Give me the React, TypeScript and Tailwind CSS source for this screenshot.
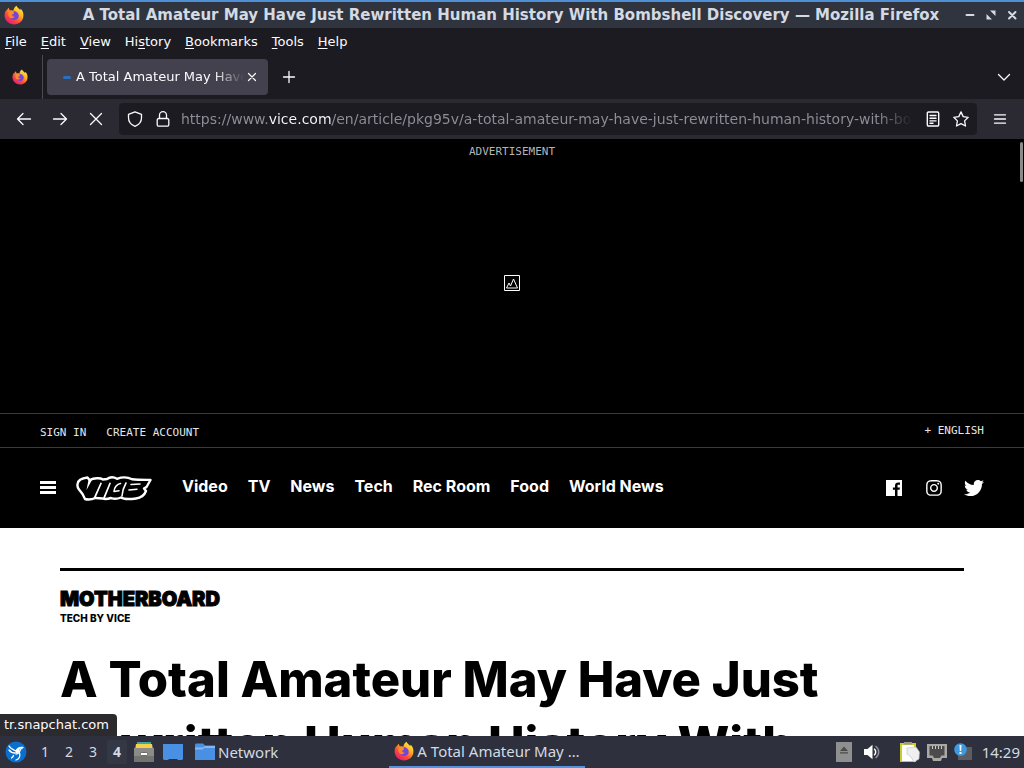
import React from "react";
import { FaInstagram, FaTwitter } from "react-icons/fa";

const PAGE_TITLE = "A Total Amateur May Have Just Rewritten Human History With Bombshell Discovery";
const HEADLINE = "A Total Amateur May Have Just Rewritten Human History With";
const PAGE_URL =
  "https://www.vice.com/en/article/pkg95v/a-total-amateur-may-have-just-rewritten-human-history-with-bombshell-discovery";

function FirefoxIcon({ className, id }: { className: string; id: string }) {
  return (
    <svg viewBox="0 0 32 32" className={className} aria-hidden="true">
      <defs>
        <linearGradient id={id} x1="0.85" y1="0.05" x2="0.2" y2="0.95">
          <stop offset="0" stopColor="#fff04a" />
          <stop offset="0.35" stopColor="#ffb025" />
          <stop offset="0.65" stopColor="#ff5034" />
          <stop offset="1" stopColor="#e11a78" />
        </linearGradient>
      </defs>
      <path
        fill={`url(#${id})`}
        d="M20 1c1 3 4 4 6 7 .6-.6.6-1.500.5-2.500C30 9 31.500 13 31 18c-.8 8-7 13-15 13S1.500 25 1 17.500c-.2-4 1-7.500 3-10 0 1 0 1.500.3 2C5 7 6.500 5.500 8 4.500c-.2 1.500.3 3 1.300 4 2-.3 4-.2 5.700.8C15 6 17 2.500 20 1z"
      />
      <path fill="#7446d8" d="M15 10c4-1 8 2 8.500 6.500C24 21 20.500 24 16.500 24S9.500 21.500 9 18c3 2 6 1.500 8-.5-2.500 0-5-1-6-3 1.500.3 3 0 4.500-1.500z" />
      <path fill="#ff8a2a" d="M7 12c2.500-1.500 5-1.300 6.500 0L16 13c0 1.500-3.500 1.800-4 3-.3 2 2 3.500 5 2.500-1.500 3-5.500 3.500-8 1.500C7.500 18.500 6 15 7 12z" />
    </svg>
  );
}

function LineIcon({ d, size = "size-4", width = 1.3 }: { d: string; size?: string; width?: number }) {
  return (
    <svg
      viewBox="0 0 16 16"
      className={`${size} shrink-0`}
      fill="none"
      stroke="currentColor"
      strokeWidth={width}
      strokeLinecap="round"
      strokeLinejoin="round"
      aria-hidden="true"
    >
      <path d={d} />
    </svg>
  );
}

function TitleBar() {
  return (
    <header className="flex h-7 shrink-0 items-center border-t-2 border-[#4f8fd6] bg-[#2f343f] px-1 text-[#d3dae3]">
      <FirefoxIcon id="fx-title" className="size-5 shrink-0" />
      <h1 className="ml-9 min-w-0 flex-1 truncate text-center text-[15px] leading-5 font-bold">
        {PAGE_TITLE} — Mozilla Firefox
      </h1>
      <div className="flex shrink-0 items-center gap-[5px]">
        <button type="button" aria-label="Minimize">
          <LineIcon d="M4.500 8h7" width={2} />
        </button>
        <button type="button" aria-label="Restore">
          <svg viewBox="0 0 16 16" className="size-4" fill="currentColor" aria-hidden="true">
            <path d="M7 3.500h5.500V9zM3.500 7v5.500H9z" />
          </svg>
        </button>
        <button type="button" aria-label="Close window">
          <LineIcon d="M5 5l6.500 6.500M11.500 5L5 11.500" width={2} />
        </button>
      </div>
    </header>
  );
}

const menus: [string, string, string][] = [
  ["", "F", "ile"],
  ["", "E", "dit"],
  ["", "V", "iew"],
  ["Hi", "s", "tory"],
  ["", "B", "ookmarks"],
  ["", "T", "ools"],
  ["", "H", "elp"],
];

function MenuBar() {
  return (
    <nav aria-label="Application menu" className="flex h-[27px] shrink-0 items-center gap-3.5 bg-[#1c1b22] px-[5px] text-[13px] text-[#fbfbfe]">
      {menus.map(([pre, key, post]) => (
        <button type="button" key={key + post}>
          {pre}
          <span className="underline underline-offset-2">{key}</span>
          {post}
        </button>
      ))}
    </nav>
  );
}

function TabStrip() {
  return (
    <div className="flex h-11 shrink-0 items-center bg-[#1c1b22] text-[#fbfbfe]">
      <button type="button" aria-label="Pinned tab" className="flex h-full w-[43px] items-center justify-center border-r border-[#4a4a55] pr-0.5">
        <FirefoxIcon id="fx-pin" className="size-4" />
      </button>
      <div className="ml-1 flex h-9 w-[221px] items-center rounded bg-[#42414d] pr-2 pl-4">
        <span className="h-[3px] w-2 shrink-0 rounded-full bg-[#2b6fc0]" />
        <button
          type="button"
          className="ml-[5px] min-w-0 flex-1 overflow-hidden text-left text-[13px] whitespace-nowrap [mask-image:linear-gradient(to_right,#000_82%,transparent)]"
        >
          {PAGE_TITLE}
        </button>
        <button type="button" aria-label="Close tab">
          <LineIcon d="M4.500 4.500l7 7M11.500 4.500l-7 7" width={1.2} />
        </button>
      </div>
      <button type="button" aria-label="New tab" className="ml-[13px]">
        <LineIcon d="M8 2.500v11M2.500 8h11" />
      </button>
      <button type="button" aria-label="List all tabs" className="mr-3 ml-auto">
        <LineIcon d="M2.500 5.500L8 11l5.500-5.500" />
      </button>
    </div>
  );
}

function Toolbar() {
  return (
    <div className="flex h-10 shrink-0 items-center bg-[#2b2a33] text-[#fbfbfe]">
      <div className="flex w-[119px] items-center gap-5 pl-4">
        <button type="button" aria-label="Back">
          <LineIcon d="M14.500 8H1.500M7 2.500L1.500 8 7 13.500" />
        </button>
        <button type="button" aria-label="Forward">
          <LineIcon d="M1.500 8h13M9 2.500L14.500 8 9 13.500" />
        </button>
        <button type="button" aria-label="Stop">
          <LineIcon d="M2.500 2.500l11 11M13.500 2.500l-11 11" />
        </button>
      </div>
      <div className="flex h-8 min-w-0 flex-1 items-center gap-3 rounded bg-[#1c1b22] px-2">
        <button type="button" aria-label="Tracking protection">
          <LineIcon d="M8 .8l6.500 2.500v3.400c0 4-2.500 7-6.500 8.600C4 13.700 1.500 10.700 1.500 6.700V3.300z" />
        </button>
        <button type="button" aria-label="Connection security">
          <LineIcon d="M4.500 7V4.200a3.500 3.500 0 0 1 7 0V7M3.700 7.500h8.600a1.500 1.500 0 0 1 1.500 1.500v4.700a1.500 1.500 0 0 1-1.500 1.500H3.700a1.500 1.500 0 0 1-1.500-1.500V9a1.500 1.500 0 0 1 1.500-1.500z" />
        </button>
        <input
          aria-label="Address"
          readOnly
          defaultValue={PAGE_URL}
          className="-ml-0.5 min-w-0 flex-1 bg-[linear-gradient(to_right,#8f8f9a_88px,#fbfbfe_88px,#fbfbfe_151px,#8f8f9a_151px)] bg-clip-text text-[14px] text-transparent outline-none [mask-image:linear-gradient(to_right,#000_95%,transparent)]"
        />
        <button type="button" aria-label="Reader view">
          <LineIcon d="M3.500 1h9a1.200 1.200 0 0 1 1.200 1.200v11.600a1.200 1.200 0 0 1-1.200 1.200h-9a1.200 1.200 0 0 1-1.200-1.200V2.200A1.200 1.200 0 0 1 3.500 1zM5 4.500h6M5 7.200h6M5 9.900h6M5 12.300h3" width={1.4} />
        </button>
        <button type="button" aria-label="Bookmark this page">
          <LineIcon d="M8 .9l2.200 4.700 5 .7-3.600 3.600.9 5.100L8 12.600 3.500 15l.9-5.100L.8 6.300l5-.7z" />
        </button>
      </div>
      <button type="button" aria-label="Open application menu" className="mr-4 ml-[15px]">
        <LineIcon d="M2.500 3.800h11M2.500 8h11M2.500 12.200h11" />
      </button>
    </div>
  );
}

function ViceLogo() {
  return (
    <svg viewBox="0 0 76 25" className="h-[25px] w-[76px]" role="img" aria-label="Vice">
      <path
        fill="none"
        stroke="#fff"
        strokeWidth="2.400"
        strokeLinejoin="round"
        d="M1.500 8C2 4 7 2 11.500 1.500l2 2.500C18 2 24 1.500 27 3.500L31 3C34 .8 38 1 41 2.800 46 1 52 1.200 56 3.200c6 .5 12 .6 18.500.8L70.500 11c-1 .8-2.500 1-2.500 1.500l2 2.500c-1.500 4-5 6.800-10 7.500-6 .8-12 1-15-1-3 1.300-7 1.700-10 .5-3 1-6 1.500-8.500.5L19.500 22c-3 1.200-7 2-10.500 1L6.500 18 3 13.500C1.800 12 1.200 10 1.500 8z"
      />
      <path fill="#fff" d="M12.500 4h3.500l-5.500 10zM24.500 6.500l1.500.5-6.500 15h-2zM33.500 6.500l1.500.5-6 15h-2z" />
      <path
        fill="none"
        stroke="#fff"
        strokeWidth="1.600"
        strokeLinecap="round"
        strokeLinejoin="round"
        d="M44.500 7.500c-3.500.5-6.500 4-6.500 8l5-.8M50 7c-2 3.500-3.500 7-4 13M55 8.500l9-.5M53 14l8-.8"
      />
    </svg>
  );
}

function SiteHeader() {
  const sections = ["Video", "TV", "News", "Tech", "Rec Room", "Food", "World News"];
  return (
    <div className="shrink-0 bg-black text-white">
      <section aria-label="Advertisement" className="flex h-[274px] flex-col items-center pt-[5px]">
        <p className="font-['DejaVu_Sans_Mono',monospace] text-[11px] leading-4 text-[#b5b5b5]">ADVERTISEMENT</p>
        <svg viewBox="0 0 16 16" className="mt-[115px] size-4" fill="none" stroke="#fff" aria-hidden="true">
          <path d="M.5.5h15v15H.5z" />
          <path d="M2.500 13l2.500-5 1.500 3 3-7 4 9z" />
        </svg>
      </section>
      <div className="flex h-[35px] items-center justify-between border-y border-[#3a3a3a] px-10 pt-0.5 font-['DejaVu_Sans_Mono',monospace] text-[11px] text-[#e6e6e6]">
        <div className="flex gap-5 pt-1">
          <a href="#signin">SIGN IN</a>
          <a href="#create">CREATE ACCOUNT</a>
        </div>
        <button type="button">+ ENGLISH</button>
      </div>
      <div className="flex h-20 items-center px-10 font-['Inter',sans-serif]">
        <button type="button" aria-label="Open menu" className="mr-5 flex flex-col gap-0.5 pb-0.5">
          <span className="h-[3px] w-4 bg-white" />
          <span className="h-[3px] w-4 bg-white" />
          <span className="h-[3px] w-4 bg-white" />
        </button>
        <a href="#home">
          <ViceLogo />
        </a>
        <nav aria-label="Sections" className="ml-[30px] flex gap-5 pb-1 text-[16px] leading-6 font-bold">
          {sections.map((s) => (
            <a key={s} href="#section">
              {s}
            </a>
          ))}
        </nav>
        <div className="ml-auto flex items-center gap-5">
          <a href="#facebook" aria-label="Facebook" className="px-0.5">
            <svg viewBox="0 0 16 16" className="size-4" aria-hidden="true">
              <path fill="#fff" d="M0 0h16v16h-4.500V9.800h2.100l.3-2.400h-2.400V5.900c0-.7.2-1.200 1.200-1.200H14V2.600C13.800 2.500 13 2.500 12.200 2.500 10.300 2.500 9 3.600 9 5.700v1.700H6.900v2.400H9V16H0z" />
            </svg>
          </a>
          <a href="#instagram" aria-label="Instagram" className="px-px">
            <FaInstagram className="size-[18px]" />
          </a>
          <a href="#twitter" aria-label="Twitter">
            <FaTwitter className="size-5" />
          </a>
        </div>
      </div>
    </div>
  );
}

function Page() {
  return (
    <main className="relative flex min-h-0 flex-1 flex-col overflow-hidden bg-white">
      <SiteHeader />
      <article className="mx-[60px] mt-10 border-t-[3px] border-black pt-4 font-['Inter',sans-serif] text-black">
        <p className="text-[20px] leading-6 font-black [-webkit-text-stroke:1px_#000]">MOTHERBOARD</p>
        <p className="text-[10px] leading-[14px] font-extrabold">TECH BY VICE</p>
        <h2 className="mt-[22px] text-[49px] leading-[65px] font-extrabold">{HEADLINE}</h2>
      </article>
      <span className="absolute top-[3px] right-px h-10 w-[3px] rounded-sm bg-[#8a8a8a]" />
      <p className="absolute bottom-0 left-0 rounded-tr bg-[#2b2a2f] pr-2 pl-1 text-[13px] leading-[22px] text-[#fbfbfe]">
        tr.snapchat.com
      </p>
    </main>
  );
}

function Taskbar() {
  return (
    <footer className="flex h-8 shrink-0 items-center bg-[#2e313d] font-['Noto_Sans',sans-serif] text-[15px] leading-5 text-[#d3dae3]">
      <button type="button" aria-label="Start menu" className="ml-[5px]">
        <svg viewBox="0 0 22 22" className="size-[22px]" aria-hidden="true">
          <circle cx="11" cy="11" r="10.500" fill="#0a6fcf" />
          <path
            fill="none"
            stroke="#fff"
            strokeWidth="1.300"
            strokeLinecap="round"
            strokeLinejoin="round"
            d="M4 5c1.500 2.500 4 4 7 5M4 9c1.500 2 3.500 3 6 3M11 10c1.500-3 4-4 7-3.500-1.500.8-2.500 1.300-3 3.200-.6 2.500-2 3.300-4 3.300M14.500 12c1 3 0 6-3.500 7M8.500 14.500c-.5 1.500-1 2-2 2.500"
          />
          <path fill="#fff" d="M10.500 9.500c1.500-2.500 3.500-3.300 5.500-3-.8 1-1.500 2-1.800 3.500-.5 1.800-2 2.800-3.700 2z" />
        </svg>
      </button>
      <nav aria-label="Desktops" className="ml-2 flex gap-1 text-[14px]">
        <button type="button" className="h-6 w-5">1</button>
        <button type="button" className="h-6 w-5">2</button>
        <button type="button" className="h-6 w-5">3</button>
        <button type="button" className="h-6 w-5 rounded-xs bg-[#343844] font-bold">4</button>
      </nav>
      <button type="button" aria-label="File manager" className="ml-[7px]">
        <svg viewBox="0 0 20 20" className="size-5" aria-hidden="true">
          <path fill="#3ea6a0" d="M3 0h14v4H3z" />
          <path fill="#f5d04c" d="M2 2h16l1 6H1z" />
          <path fill="#8b8b87" d="M0 6h20v14H0z" />
          <path fill="#747471" d="M0 14h20v6H0z" />
          <rect x="6.500" y="10.500" width="7" height="3" rx="1" fill="#fff" stroke="#555" strokeWidth=".8" />
        </svg>
      </button>
      <button type="button" aria-label="Show desktop" className="ml-[9px]">
        <svg viewBox="0 0 20 20" className="size-5" aria-hidden="true">
          <path fill="#4a90e2" d="M0 2h20v15l-1 1h-4l-1-1H6l-1 1H1l-1-1z" />
        </svg>
      </button>
      <button type="button" className="ml-3 flex items-center gap-[3px]">
        <svg viewBox="0 0 20 20" className="size-5" aria-hidden="true">
          <path fill="#4a90e2" d="M0 2.500l1-1h7l2 2h10V18H0z" />
          <path fill="#85b8f2" d="M0 5.500h8l2-1.500h10v2H9L7.500 7.500H0z" />
        </svg>
        Network
      </button>
      <button type="button" className="ml-[111px] flex h-full w-[196px] items-center border-b-2 border-[#5294e2] px-[5px]">
        <FirefoxIcon id="fx-task" className="size-5 shrink-0" />
        <span className="ml-[3px] truncate">A Total Amateur May …</span>
      </button>
      <div className="ml-auto flex items-center pr-1">
        <svg viewBox="0 0 16 20" className="mr-3 h-5 w-4" aria-hidden="true">
          <path fill="#8f8f8f" d="M0 0h16v20H0z" />
          <path fill="#4c4c4c" d="M8 4.500l4 4.500H4zM4 10.300h8v1.200H4z" />
        </svg>
        <svg viewBox="0 0 16 16" className="mr-5 size-4" aria-hidden="true">
          <path fill="#fff" d="M0 5h3.500L8.500.8v14.400L3.500 11H0z" />
          <path fill="none" stroke="#fff" strokeWidth="1.500" d="M10.200 4.800c2 1.800 2 4.600 0 6.400" />
          <path fill="none" stroke="#8c909b" strokeWidth="1.500" d="M11.500 2c4.300 3.300 4.300 8.700 0 12" />
        </svg>
        <svg viewBox="0 0 20 22" className="mr-[7px] h-[22px] w-5" aria-hidden="true">
          <path fill="#c9cc2c" d="M0 2h16v19H0z" />
          <path fill="#fff" d="M2 4h12v16H2z" />
          <path fill="#999" d="M4 1h8v2.500H4z" />
          <path fill="#efefef" stroke="#bdbdbd" strokeWidth=".6" d="M7 7l9-1 3.500 5-.5 7-5 3-3-5-4-3z" />
        </svg>
        <svg viewBox="0 0 20 18" className="mr-[7px] h-[18px] w-5" aria-hidden="true">
          <path fill="#aaa8a4" d="M0 1h20v14h-5l-1 3H6l-1-3H0z" />
          <path fill="#4b4b4b" d="M2.500 3h15v9.500h-3.200L13 15H7l-1.300-2.500H2.500z" />
          <path stroke="#c8c8c8" d="M5.500 3v3M8.500 3v3M11.500 3v3M14.500 3v3" />
        </svg>
        <svg viewBox="0 0 18 18" className="mr-2.5 size-[18px]" aria-hidden="true">
          <path fill="#5b5d61" d="M4 4h14v13H4z" />
          <circle cx="6.500" cy="6.500" r="6.300" fill="#3d9ae0" />
          <path fill="#fff" d="M5.500 2h2l-.3 6H5.800zM5.500 9h2v2h-2z" />
        </svg>
        <time>14:29</time>
      </div>
    </footer>
  );
}

export default function App() {
  return (
    <div className="flex h-screen flex-col overflow-hidden font-['DejaVu_Sans',sans-serif]">
      <TitleBar />
      <MenuBar />
      <TabStrip />
      <Toolbar />
      <Page />
      <Taskbar />
    </div>
  );
}
